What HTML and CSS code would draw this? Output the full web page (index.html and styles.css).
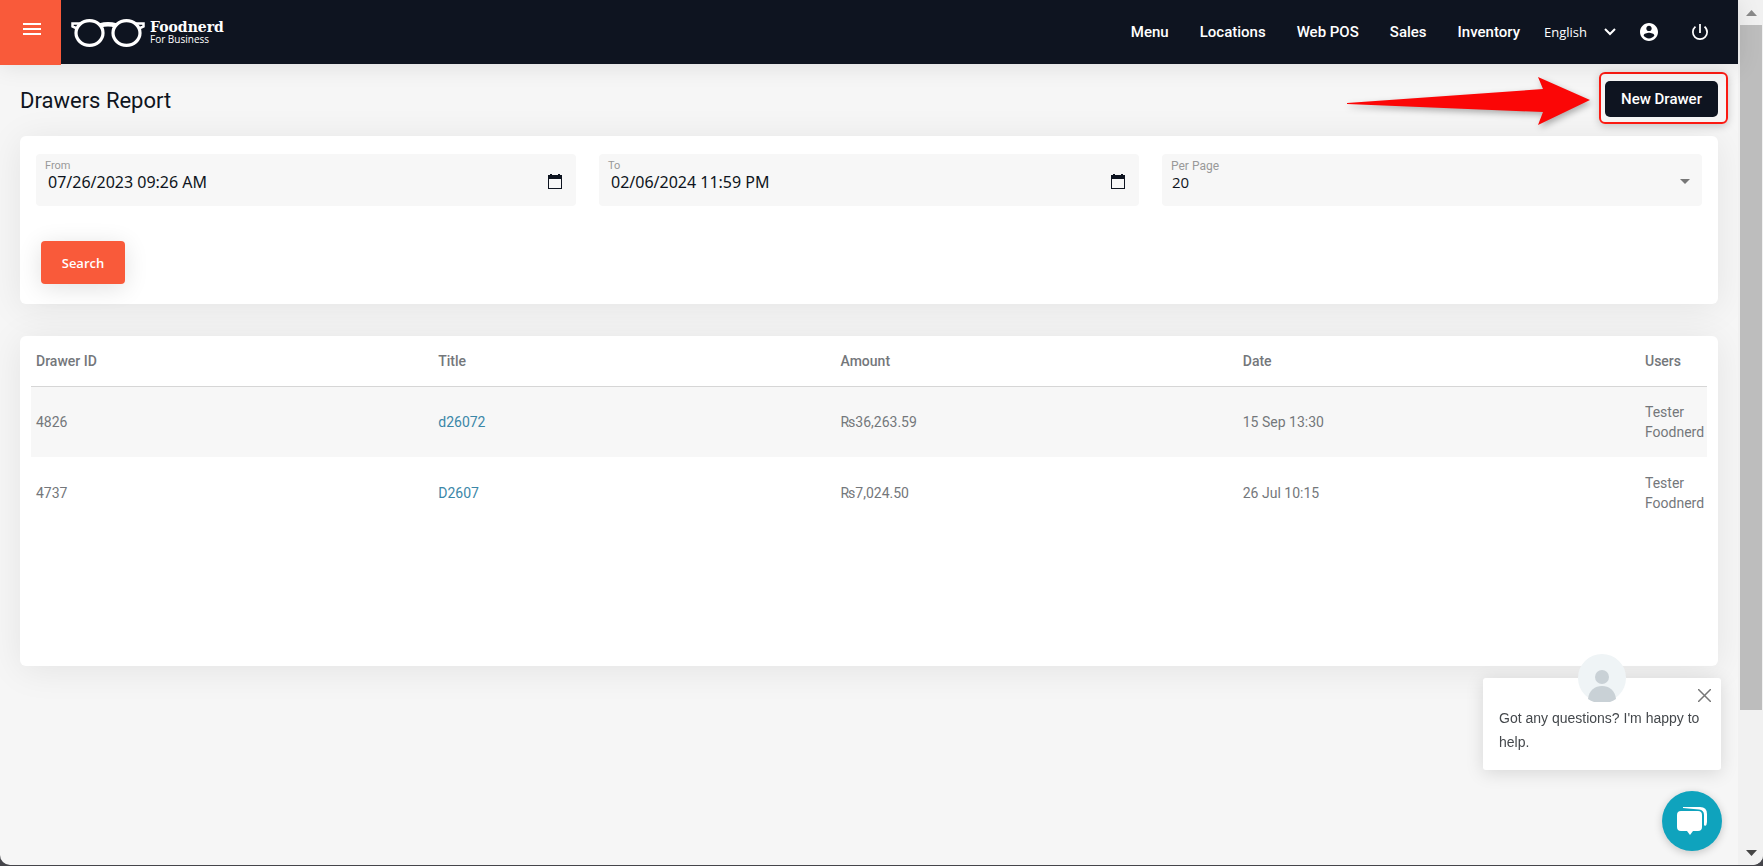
FILE: index.html
```html
<!DOCTYPE html>
<html lang="en">
<head>
<meta charset="utf-8">
<title>Drawers Report</title>
<link rel="stylesheet" href="styles.css">
</head>
<body>
<div class="window">
  <div class="page">
    <header class="topbar">
      <button class="menu-toggle" type="button" aria-label="Toggle menu">
        <svg width="18" height="12" viewBox="0 0 18 12" fill="#fff"><path d="M0 0h18v2H0zM0 5h18v2H0zM0 10h18v2H0z"/></svg>
      </button>
      <a class="brand" href="#">
        <svg width="74" height="28" viewBox="0 0 74 28" fill="none" stroke="#fff">
          <ellipse cx="18.500" cy="14" rx="13.500" ry="12.300" stroke-width="3.200"/>
          <ellipse cx="55.500" cy="14" rx="13.500" ry="12.300" stroke-width="3.200"/>
          <path d="M29 6.500Q37 4 45 6.500" stroke-width="4.500"/>
          <path d="M10 4.500H1.500V7.500L6 9.500M64 4.500H72.500V7.500L68 9.500" stroke-width="2.500"/>
        </svg>
        <span class="brand-text"><strong class="brand-name">Foodnerd</strong><span class="brand-sub">For Business</span></span>
      </a>
      <nav class="nav">
        <a href="#">Menu</a><a href="#">Locations</a><a href="#">Web POS</a><a href="#">Sales</a><a href="#">Inventory</a>
      </nav>
      <div class="tools">
        <span class="language">
          <select class="language-select" aria-label="Language"><option>English</option></select>
          <svg class="language-arrow" width="12" height="8" viewBox="0 0 12 8" fill="none" stroke="#fff" stroke-width="2"><path d="M1 1l5 5 5-5"/></svg>
        </span>
        <button class="tool" type="button" aria-label="Account">
          <svg width="18" height="18" viewBox="2 2 20 20" fill="#fff"><path d="M12 2C6.480 2 2 6.480 2 12s4.480 10 10 10 10-4.480 10-10S17.520 2 12 2zm0 3c1.660 0 3 1.340 3 3s-1.340 3-3 3-3-1.340-3-3 1.340-3 3-3zm0 14.200c-2.500 0-4.710-1.280-6-3.220.030-1.990 4-3.080 6-3.080 1.990 0 5.970 1.090 6 3.080-1.290 1.940-3.500 3.220-6 3.220z"/></svg>
        </button>
        <button class="tool" type="button" aria-label="Log out">
          <svg width="16" height="16" viewBox="3 3 18 18" fill="#fff"><path d="M13 3h-2v10h2V3zm4.830 2.170l-1.420 1.420A6.920 6.920 0 0 1 19 12c0 3.870-3.130 7-7 7s-7-3.130-7-7c0-2.190 1.010-4.140 2.580-5.420L6.170 5.170A8.930 8.930 0 0 0 3 12a9 9 0 0 0 18 0c0-2.740-1.230-5.180-3.170-6.830z"/></svg>
        </button>
      </div>
    </header>

    <main class="content">
      <div class="heading">
        <h1 class="title">Drawers Report</h1>
        <svg class="arrow" width="243" height="48" viewBox="0 0 243 48" fill="#fb0606"><path d="M0 26L196 12L191 0L243 23L191 48L196 35L0 27z"/></svg>
        <div class="highlight"><button class="new-drawer" type="button">New Drawer</button></div>
      </div>

      <form class="card filters">
        <div class="fields">
          <div class="field">
            <label for="from">From</label>
            <input id="from" type="text" value="07/26/2023 09:26 AM">
            <svg class="calendar" width="14" height="15" viewBox="0 0 14 15" fill="#0e1420"><path d="M2 0h2v1h6V0h2v1h2v14H0V1h2zM1 5v9h12V5z" fill-rule="evenodd"/></svg>
          </div>
          <div class="field">
            <label for="to">To</label>
            <input id="to" type="text" value="02/06/2024 11:59 PM">
            <svg class="calendar" width="14" height="15" viewBox="0 0 14 15" fill="#0e1420"><path d="M2 0h2v1h6V0h2v1h2v14H0V1h2zM1 5v9h12V5z" fill-rule="evenodd"/></svg>
          </div>
          <div class="field field-select">
            <label for="per-page">Per Page</label>
            <select id="per-page"><option>20</option></select>
            <svg class="caret" width="10" height="5" viewBox="0 0 10 5" fill="#777"><path d="M0 0h10L5 5z"/></svg>
          </div>
        </div>
        <button class="search" type="button">Search</button>
      </form>

      <section class="card results">
        <table class="table">
          <thead><tr><th>Drawer ID</th><th>Title</th><th>Amount</th><th>Date</th><th class="users">Users</th></tr></thead>
          <tbody>
            <tr><td>4826</td><td><a href="#">d26072</a></td><td>₨36,263.59</td><td>15 Sep 13:30</td><td>Tester Foodnerd</td></tr>
            <tr><td>4737</td><td><a href="#">D2607</a></td><td>₨7,024.50</td><td>26 Jul 10:15</td><td>Tester Foodnerd</td></tr>
          </tbody>
        </table>
      </section>
    </main>

    <aside class="chat">
      <div class="chat-card">
        <svg class="avatar" width="48" height="48" viewBox="0 0 48 48"><circle cx="24" cy="24" r="24" fill="#eff4f6"/><circle cx="24" cy="23" r="7" fill="#c9d1d6"/><path d="M10 45c1-9 7-13 14-13s13 4 14 13a25 25 0 0 1-28 0z" fill="#c9d1d6"/></svg>
        <button class="chat-close" type="button" aria-label="Close"><svg width="13" height="13" viewBox="0 0 13 13" stroke="#777" stroke-width="1.500"><path d="M0 0l13 13M13 0L0 13"/></svg></button>
        <p class="chat-text">Got any questions? I'm happy to help.</p>
      </div>
      <button class="chat-open" type="button" aria-label="Open chat">
        <svg width="30" height="30" viewBox="0 0 30 30"><path d="M6 1h17q7 0 7 7v8q0 3-2 4l-1-1V9q0-5-5-5.500L6 2z" fill="#fff"/><path d="M4 5h17q4 0 4 4v12q0 4-4 4h-5l-3 4-3-4H4q-4 0-4-4V9q0-4 4-4z" fill="#fff"/></svg>
      </button>
    </aside>
  </div>
  <div class="scrollbar">
    <svg class="scroll-up" width="11" height="6" viewBox="0 0 11 6" fill="#8a8a8a"><path d="M0 6h11L5.500 0z"/></svg>
    <div class="scroll-thumb"></div>
    <svg class="scroll-down" width="11" height="6" viewBox="0 0 11 6" fill="#444"><path d="M0 0h11L5.500 6z"/></svg>
  </div>
</div>
</body>
</html>
```
FILE: styles.css
```css
* { box-sizing: border-box; }
body { margin: 0; background: #45454a; font-family: Roboto, "Liberation Sans", sans-serif; }
a { text-decoration: none; }
button { border: 0; padding: 0; font-family: inherit; cursor: pointer; }
svg { display: block; flex: none; }

.window { display: flex; height: calc(100vh - 1px); border-radius: 0 0 10px 10px; overflow: hidden; background: #f6f6f6; }
.page { flex: 1; min-width: 0; }

.topbar { display: flex; align-items: center; height: 64px; background: #0e1420; position: relative; z-index: 1; box-shadow: 0 2px 24px rgba(0, 0, 0, 0.1); }
.menu-toggle { align-self: flex-start; width: 61px; height: 65px; padding: 0 0 7px 3px; background: #f95a3a; display: flex; align-items: center; justify-content: center; flex: none; }
.brand { display: flex; align-items: center; gap: 5px; margin: 2px 0 0 10px; color: #fff; }
.brand-text { display: flex; flex-direction: column; padding-bottom: 2px; }
.brand-name { font: 700 14px/14px "DejaVu Serif", serif; }
.brand-sub { font: 10px/10px "Open Sans", sans-serif; }
.nav { display: flex; gap: 31px; margin-left: auto; font-size: 15px; font-weight: 500; }
.nav a { color: #fff; }
.tools { display: flex; align-items: center; margin: 0 30px 0 24px; }
.language { position: relative; display: flex; align-items: center; margin-right: 24px; }
.language-select { appearance: none; width: 72px; border: 0; padding: 0; background: transparent; color: #fff; font: 13px "Open Sans", sans-serif; }
.language-arrow { position: absolute; right: 0; pointer-events: none; }
.tool { background: none; }
.tool + .tool { margin-left: 34px; }

.content { padding: 0 20px; }
.heading { display: flex; align-items: flex-start; height: 72px; padding-top: 8px; margin-right: -10px; }
.title { margin: 15px auto 0 0; color: #0e1420; font-size: 22px; font-weight: 400; line-height: 28px; }
.arrow { margin: 5px 9px 0 0; filter: drop-shadow(2px 3px 3px rgba(0, 0, 0, 0.3)); }
.highlight { padding: 7px 8px 5px 4px; border: 2px solid #fb1a12; border-radius: 6px; box-shadow: 0 2px 8px rgba(0, 0, 0, 0.2); }
.new-drawer { display: block; width: 113px; height: 36px; border-radius: 5px; background: #0e1420; color: #fff; font-size: 15px; font-weight: 500; }

.card { background: #fff; border-radius: 6px; box-shadow: 0 4px 36px rgba(0, 0, 0, 0.08); }
.filters { padding: 18px 16px 20px; margin-bottom: 32px; }
.fields { display: grid; grid-template-columns: repeat(3, 1fr); gap: 23px; margin-bottom: 35px; }
.field { position: relative; display: flex; flex-direction: column; height: 52px; padding: 6px 12px 0 9px; border-radius: 4px; background: #f7f7f7; }
.field label { color: #999; font-size: 11px; line-height: 12px; }
.field input, .field select { appearance: none; width: 100%; height: 20px; border: 0; padding: 0 0 0 3px; background: transparent; color: #0e1420; font: 16px/20px "Noto Sans", sans-serif; }
.field-select label { font-size: 12px; }
.field select { padding: 0 1px; font-family: "Open Sans", sans-serif; font-size: 15px; }
.calendar { position: absolute; right: 14px; top: 20px; }
.caret { position: absolute; right: 12px; top: 25px; pointer-events: none; }
.search { display: block; width: 84px; height: 43px; margin-left: 5px; border-radius: 4px; background: #f95a3a; color: #fff; font: 600 13px "Open Sans", sans-serif; box-shadow: 0 4px 24px rgba(0, 0, 0, 0.12); }

.results { min-height: 330px; padding: 0 11px; }
.table { width: 100%; table-layout: fixed; border-collapse: collapse; color: #74777b; font-size: 14px; line-height: 20px; }
.table th { height: 50px; padding: 0 5px; border-bottom: 1px solid #d6d6d6; text-align: left; font-weight: 500; }
.table td { height: 71px; padding: 0 5px; }
.table .users { width: 67px; }
.table tbody tr:nth-child(odd) { background: #f7f7f7; }
.table a { color: #3b87a8; }

.chat { position: fixed; right: 41px; bottom: 15px; z-index: 2; width: 239px; display: flex; flex-direction: column; align-items: flex-end; gap: 21px; }
.chat-card { position: relative; align-self: stretch; margin-right: 1px; padding: 28px 16px 16px; border-radius: 3px; background: #fff; box-shadow: 0 3px 18px rgba(0, 0, 0, 0.13); }
.chat-text { margin: 0; color: #44484c; font: 14px/24px "Liberation Sans", Arial, sans-serif; }
.avatar { position: absolute; left: 95px; top: -24px; }
.chat-close { position: absolute; right: 10px; top: 11px; background: none; }
.chat-open { width: 60px; height: 60px; border-radius: 50%; background: #0fa3bd; display: flex; align-items: center; justify-content: center; box-shadow: 0 2px 8px rgba(0, 0, 0, 0.2); }

.scrollbar { flex: none; width: 25px; display: flex; flex-direction: column; align-items: center; padding: 10px 1px 9px 2px; background: #f1f1f1; }
.scroll-thumb { width: 100%; height: 685px; margin-top: 9px; background: #bdbdbd; }
.scroll-down { margin-top: auto; }
```
